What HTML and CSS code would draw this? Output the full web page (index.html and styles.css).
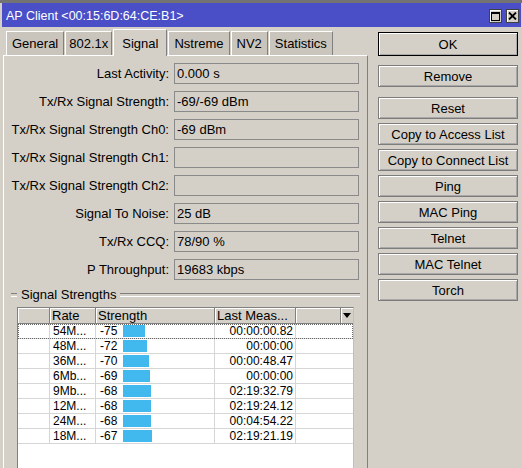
FILE: index.html
```html
<!DOCTYPE html>
<html>
<head>
<meta charset="utf-8">
<link rel="stylesheet" href="styles.css">
</head>
<body>
<div class="window">
  <div class="titlebar">
    <span class="title">AP Client &lt;00:15:6D:64:CE:B1&gt;</span>
    <div class="title-btns">
      <span class="tbtn"><svg width="9" height="9" viewBox="0 0 9 9"><rect x="0.5" y="0.5" width="8" height="8" fill="none" stroke="#000"/><line x1="0" y1="1.5" x2="9" y2="1.5" stroke="#000"/></svg></span>
      <span class="tbtn"><svg width="9" height="8" viewBox="0 0 9 8"><path d="M1 0.5 L8 7.5 M8 0.5 L1 7.5" stroke="#000" stroke-width="1.8" fill="none"/></svg></span>
    </div>
  </div>
  <div class="main">
    <div class="left">
      <div class="tabs">
        <div class="tab">General</div>
        <div class="tab tab-narrow">802.1x</div>
        <div class="tab tab-active">Signal</div>
        <div class="tab">Nstreme</div>
        <div class="tab">NV2</div>
        <div class="tab">Statistics</div>
      </div>
      <div class="panel">
        <div class="form">
          <div class="lbl">Last Activity:</div><div class="field">0.000 s</div>
          <div class="lbl">Tx/Rx Signal Strength:</div><div class="field">-69/-69 dBm</div>
          <div class="lbl">Tx/Rx Signal Strength Ch0:</div><div class="field">-69 dBm</div>
          <div class="lbl">Tx/Rx Signal Strength Ch1:</div><div class="field"></div>
          <div class="lbl">Tx/Rx Signal Strength Ch2:</div><div class="field"></div>
          <div class="lbl">Signal To Noise:</div><div class="field">25 dB</div>
          <div class="lbl">Tx/Rx CCQ:</div><div class="field">78/90 %</div>
          <div class="lbl">P Throughput:</div><div class="field">19683 kbps</div>
        </div>
        <div class="group">
          <div class="group-head"><span class="group-title">Signal Strengths</span></div>
          <div class="table">
            <div class="thead">
              <div class="th"></div>
              <div class="th">Rate</div>
              <div class="th">Strength</div>
              <div class="th">Last Meas...</div>
              <div class="th"></div>
              <div class="th th-menu"><span class="arrow"></span></div>
            </div>
            <div class="tr tr-focus"><div class="td"></div><div class="td">54M...</div><div class="td td-str"><span class="sval">-75</span><span class="bar" style="width:22px"></span></div><div class="td td-num">00:00:00.82</div><div class="td"></div></div>
            <div class="tr"><div class="td"></div><div class="td">48M...</div><div class="td td-str"><span class="sval">-72</span><span class="bar" style="width:24px"></span></div><div class="td td-num">00:00:00</div><div class="td"></div></div>
            <div class="tr"><div class="td"></div><div class="td">36M...</div><div class="td td-str"><span class="sval">-70</span><span class="bar" style="width:26px"></span></div><div class="td td-num">00:00:48.47</div><div class="td"></div></div>
            <div class="tr"><div class="td"></div><div class="td">6Mb...</div><div class="td td-str"><span class="sval">-69</span><span class="bar" style="width:27px"></span></div><div class="td td-num">00:00:00</div><div class="td"></div></div>
            <div class="tr"><div class="td"></div><div class="td">9Mb...</div><div class="td td-str"><span class="sval">-68</span><span class="bar" style="width:28px"></span></div><div class="td td-num">02:19:32.79</div><div class="td"></div></div>
            <div class="tr"><div class="td"></div><div class="td">12M...</div><div class="td td-str"><span class="sval">-68</span><span class="bar" style="width:28px"></span></div><div class="td td-num">02:19:24.12</div><div class="td"></div></div>
            <div class="tr"><div class="td"></div><div class="td">24M...</div><div class="td td-str"><span class="sval">-68</span><span class="bar" style="width:28px"></span></div><div class="td td-num">00:04:54.22</div><div class="td"></div></div>
            <div class="tr"><div class="td"></div><div class="td">18M...</div><div class="td td-str"><span class="sval">-67</span><span class="bar" style="width:29px"></span></div><div class="td td-num">02:19:21.19</div><div class="td"></div></div>
          </div>
        </div>
      </div>
    </div>
    <div class="buttons">
      <button class="btn btn-default">OK</button>
      <button class="btn btn-remove">Remove</button>
      <div class="btn-stack">
        <button class="btn">Reset</button>
        <button class="btn">Copy to Access List</button>
        <button class="btn">Copy to Connect List</button>
        <button class="btn">Ping</button>
        <button class="btn">MAC Ping</button>
        <button class="btn">Telnet</button>
        <button class="btn">MAC Telnet</button>
        <button class="btn">Torch</button>
      </div>
    </div>
  </div>
</div>
</body>
</html>
```

FILE: styles.css
```css
* { box-sizing: border-box; }
html, body { margin: 0; padding: 0; }
body {
  width: 522px;
  height: 468px;
  overflow: hidden;
  background: #d4d0c8;
  font-family: "Liberation Sans", Arial, sans-serif;
  font-size: 13px;
  color: #000;
}
.window {
  height: 468px;
  overflow: hidden;
  border-top: 3px solid #737373;
}
.titlebar {
  height: 24px;
  margin: 0 1px 0 2px;
  padding: 0 2px 0 4px;
  background: #4a4fc7;
  display: flex;
  align-items: center;
}
.title {
  flex: 1;
  color: #fff;
  font-size: 12.5px;
  white-space: nowrap;
  padding-top: 2px;
}
.title-btns {
  display: flex;
  gap: 4px;
  margin-top: 2px;
}
.tbtn {
  width: 13px;
  height: 14px;
  background: #d4d0c8;
  border: 1px solid #404040;
  box-shadow: inset 1px 1px #fff;
  display: flex;
  align-items: center;
  justify-content: center;
}
.tbtn svg { display: block; }

.main {
  display: flex;
  align-items: flex-start;
  gap: 10px;
  padding: 2px 0 0 3px;
}
.left { width: 365px; }
.tabs {
  display: flex;
  align-items: flex-end;
  gap: 1px;
  height: 26px;
  padding-left: 3px;
}
.tab {
  height: 24px;
  padding: 0 5px;
  background: #c9c5bd;
  border-top: 1px solid #fff;
  border-left: 1px solid #fff;
  border-right: 1px solid #808080;
  display: flex;
  align-items: center;
  line-height: 15px;
  white-space: nowrap;
}
.tab-narrow { padding: 0 3px; }
.tab-active {
  height: 27px;
  margin-bottom: -1px;
  padding: 0 8px 0 8px;
  background: #d4d0c8;
  position: relative;
  z-index: 1;
}
.panel {
  height: 413px;
  background: #d4d0c8;
  border-top: 1px solid #fff;
  border-left: 1px solid #fff;
  border-right: 1px solid #808080;
  padding-top: 7px;
}
.form {
  display: grid;
  grid-template-columns: 165px 185px;
  column-gap: 5px;
  row-gap: 7px;
}
.lbl {
  text-align: right;
  align-self: center;
  white-space: nowrap;
}
.field {
  height: 21px;
  border: 1px solid #8a8a8a;
  padding-left: 2px;
  display: flex;
  align-items: center;
  white-space: nowrap;
}
.group { margin: 7px 7px 0; }
.group-head {
  display: flex;
  align-items: center;
  height: 16px;
  line-height: 16px;
}
.group-head::before,
.group-head::after {
  content: "";
  height: 2px;
  border-top: 1px solid #808080;
  border-bottom: 1px solid #fff;
}
.group-head::before { width: 6px; }
.group-head::after { flex: 1; }
.group-title { padding: 0 4px; white-space: nowrap; }

.table {
  margin: 4px 6px 0;
  height: 161px;
  background: #fff;
  border-top: 1px solid #808080;
  border-left: 1px solid #808080;
  border-right: 1px solid #c0c0c0;
}
.thead {
  display: grid;
  grid-template-columns: 32px 46px 119px 81px 45px 1fr;
  height: 16px;
  background: #d4d0c8;
}
.th {
  border-right: 1px solid #808080;
  border-bottom: 1px solid #808080;
  box-shadow: inset 1px 1px #fff;
  padding-left: 2px;
  font-size: 13px;
  line-height: 15px;
  white-space: nowrap;
  overflow: hidden;
}
.th-menu {
  border-right: 0;
  display: flex;
  align-items: center;
  justify-content: center;
  padding: 0;
}
.arrow {
  width: 0;
  height: 0;
  border-left: 4px solid transparent;
  border-right: 4px solid transparent;
  border-top: 5px solid #000;
}
.tr {
  display: grid;
  grid-template-columns: 32px 46px 119px 81px 1fr;
  height: 15px;
  border-bottom: 1px solid #d6d6d6;
  font-size: 12px;
  line-height: 14px;
}
.tr-focus {
  outline: 1px dotted #6a6a6a;
  outline-offset: -1px;
}
.td {
  border-right: 1px solid #d6d6d6;
  padding-left: 3px;
  white-space: nowrap;
  overflow: hidden;
}
.td:last-child { border-right: 0; }
.td-str {
  display: flex;
  align-items: center;
  padding-left: 4px;
}
.sval { width: 23px; flex: none; }
.bar {
  height: 12px;
  background: #41b8ee;
  flex: none;
}
.td-num {
  text-align: right;
  padding: 0 2px 0 0;
}

.buttons {
  width: 140px;
  display: flex;
  flex-direction: column;
  padding-top: 3px;
}
.btn {
  height: 22px;
  margin: 0;
  padding: 0;
  font-family: inherit;
  font-size: 13px;
  color: #000;
  background: #d4d0c8;
  border: 1px solid #7c7c7c;
  box-shadow: inset 1px 1px #fff, inset -1px -1px #a8a8a8;
  display: flex;
  align-items: center;
  justify-content: center;
  white-space: nowrap;
}
.btn-default {
  height: 24px;
  border-color: #000;
}
.btn-remove { margin-top: 9px; }
.btn-stack {
  display: flex;
  flex-direction: column;
  gap: 4px;
  margin-top: 10px;
}
```
